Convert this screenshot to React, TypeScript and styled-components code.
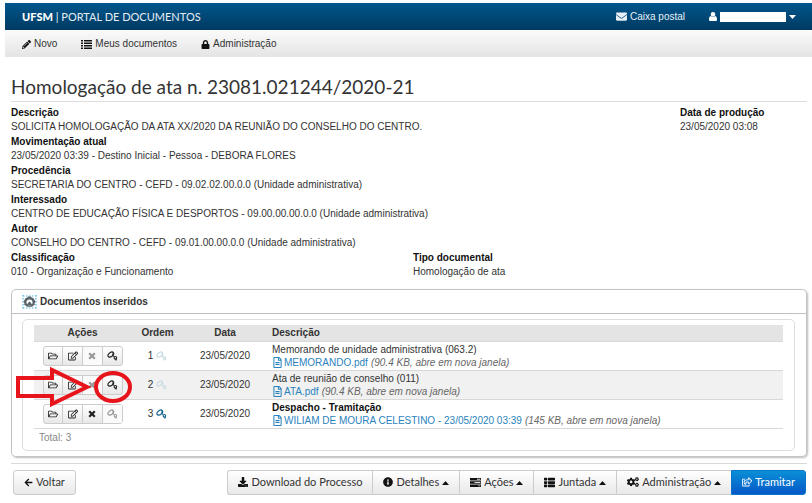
import React from "react";
import styled, { createGlobalStyle, css } from "styled-components";
import {
  FaPencilAlt, FaLock, FaEnvelope, FaRegFolderOpen, FaRegEdit,
  FaRegFileAlt, FaArrowLeft, FaDownload, FaInfoCircle, FaThList, FaCogs,
  FaRegShareSquare,
} from "react-icons/fa";

const GlobalStyle = createGlobalStyle`
  *, *::before, *::after { box-sizing: border-box; }
  body {
    margin: 0;
    background: #fff;
    color: #333;
    font: 10px/14px "Liberation Sans", Arial, sans-serif;
  }
  button { font: inherit; color: inherit; cursor: pointer; }
  a { text-decoration: none; }
  svg { flex: none; }
`;

const Page = styled.div`
  padding: 3px 0 8px 5px;
`;

const TopBar = styled.header`
  display: flex;
  align-items: center;
  height: 27px;
  padding: 0 16px 0 17px;
  background: linear-gradient(#00568c, #003a62);
  color: #fff;
`;

const Brand = styled.a`
  margin-right: auto;
  color: #e4edf4;
  font: 11px/16px Lato, sans-serif;
  b { color: #fff; font-weight: 900; }
`;

const TopLink = styled.a`
  display: flex;
  align-items: center;
  gap: 3px;
  color: #e8f0f6;
`;

const UserButton = styled.button`
  display: flex;
  align-items: center;
  gap: 3px;
  margin-left: 24px;
  padding: 0;
  border: 0;
  background: none;
  color: #fff;
`;

const HiddenName = styled.span`
  width: 66px;
  height: 10px;
  background: #fff;
`;

const NavBar = styled.nav`
  display: flex;
  align-items: center;
  gap: 24px;
  height: 27px;
  padding: 0 17px;
  border-top: 1px solid #fff;
  background: linear-gradient(#fafafa, #e4e4e4);
`;

const NavLink = styled.a`
  display: flex;
  align-items: center;
  gap: 3px;
  color: #333;
  svg { color: #111; }
`;

const Main = styled.main`
  padding: 17px 5px 0 6px;
`;

const Title = styled.h1`
  margin: 0;
  padding-bottom: 1px;
  border-bottom: 1px solid #ddd;
  color: #333;
  font: 400 19px/26px Lato, sans-serif;
`;

const Details = styled.dl`
  display: grid;
  grid-template-columns: 402fr 267fr 127fr;
  row-gap: 1px;
  margin: 0;
  padding: 4px 0 10px;
`;

const Field = styled.div<{ $span?: number }>`
  grid-column: span ${(p) => p.$span ?? 1};
  dt { color: #111; font-weight: 700; }
  dd { margin: 0; }
`;

const Panel = styled.section`
  border: 1px solid #c4c4c4;
  border-radius: 5px;
  box-shadow: 1px 1px 2px #bbb;
`;

const PanelHeader = styled.h2`
  display: flex;
  align-items: center;
  gap: 3px;
  height: 24px;
  margin: 0;
  padding: 0 10px;
  border-bottom: 1px solid #c0c0c0;
  font-size: 10px;
`;

const PanelBody = styled.div`
  margin: 5px 11px 5px 10px;
  padding: 5px 11px;
  border: 1px solid #ddd;
  border-radius: 5px;
`;

const DocTable = styled.table`
  width: 100%;
  border-collapse: collapse;
  table-layout: fixed;
`;

const Column = styled.col<{ $width?: number }>`
  ${(p) => p.$width && css`width: ${p.$width}px;`}
`;

const HeadCell = styled.th<{ $left?: boolean }>`
  height: 16px;
  padding: 0 ${(p) => (p.$left ? 6 : 0)}px;
  background: #e4e4e4;
  text-align: ${(p) => (p.$left ? "left" : "center")};
`;

const Row = styled.tr<{ $shaded?: boolean }>`
  border-top: 1px solid #d8d8d8;
  border-bottom: 1px solid #d8d8d8;
  background: ${(p) => (p.$shaded ? "#f1f1f1" : "#fff")};
`;

const Cell = styled.td<{ $left?: boolean }>`
  position: relative;
  height: 29px;
  padding: 0 ${(p) => (p.$left ? 6 : 0)}px;
  text-align: ${(p) => (p.$left ? "left" : "center")};
  line-height: 13px;
`;

const Actions = styled.div`
  display: inline-flex;
  width: 80px;
  height: 20px;
  border: 1px solid #ccc;
  border-radius: 3px;
  background: linear-gradient(#fff, #e8e8e8);
  vertical-align: middle;
`;

const ActionButton = styled.button`
  display: flex;
  flex: 1;
  align-items: center;
  justify-content: center;
  padding: 0;
  border: 0;
  background: none;
  color: #222;
  & + & { border-left: 1px solid #ccc; }
  &:disabled { background: #fafafa; color: #999; cursor: default; }
`;

const Order = styled.span<{ $signed?: boolean }>`
  display: inline-flex;
  align-items: center;
  gap: 3px;
  svg { color: ${(p) => (p.$signed ? "#14628f" : "#c9dce2")}; }
`;

const DocTitle = styled.div<{ $strong?: boolean }>`
  ${(p) => p.$strong && css`color: #111; font-weight: 700;`}
`;

const FileLine = styled.div`
  display: flex;
  align-items: center;
  gap: 3px;
  color: #666;
  white-space: nowrap;
`;

const FileLink = styled.a`
  display: flex;
  align-items: center;
  gap: 1px;
  color: #2a83bd;
`;

const Total = styled.p`
  margin: 2px 0 0;
  padding-left: 5px;
  color: #888;
  line-height: 14px;
`;

const Annotation = styled.svg`
  position: absolute;
  z-index: 1;
  top: -6px;
  left: -19px;
  pointer-events: none;
`;

const Footer = styled.footer`
  display: flex;
  justify-content: space-between;
  margin-top: 6px;
  padding: 6px 1px 0 2px;
  border-top: 1px solid #d8d8d8;
`;

const ButtonGroup = styled.div`
  display: flex;
`;

const Button = styled.button<{ $primary?: boolean }>`
  display: flex;
  align-items: center;
  gap: 3px;
  height: 25px;
  padding: 0 10px;
  border: 1px solid #ccc;
  border-right-width: 0;
  background: linear-gradient(#fff, #e8e8e8);
  color: #333;
  font: 11px/16px Lato, sans-serif;
  white-space: nowrap;
  svg { color: #111; }
  &:first-child { border-radius: 3px 0 0 3px; }
  &:last-child { border-right-width: 1px; border-radius: 0 3px 3px 0; }
  &:only-child { border-radius: 3px; }
  ${(p) => p.$primary && css`
    border-color: #0874c8;
    background: linear-gradient(#0a8fd6, #0558c8);
    color: #fff;
    svg { color: #fff; }
  `}
`;

const KeyIcon = () => (
  <svg width="11" height="10" viewBox="0 0 11 10" fill="none" stroke="currentColor" aria-hidden="true">
    <ellipse cx="3.8" cy="3.6" rx="3.2" ry="2" transform="rotate(-35 3.8 3.6)" strokeWidth="1.2" />
    <path d="M6.2 1.6 5.800 4.400 7.200 5.600" strokeWidth="1.1" />
    <circle cx="8.400" cy="6.800" r="1.300" strokeWidth="1.1" />
    <path d="M8 8.800h2" strokeWidth="1" />
  </svg>
);

const ListIcon = () => (
  <svg width="11" height="9" viewBox="0 0 11 9" fill="currentColor" aria-hidden="true">
    <path d="M0 0h2v1.5H0zM3 0h8v1.5H3zM0 2.5h2V4H0zM3 2.5h8V4H3zM0 5h2v1.5H0zM3 5h8v1.5H3zM0 7.5h2V9H0zM3 7.5h8V9H3z" />
  </svg>
);

const TasksIcon = () => (
  <svg width="11" height="9" viewBox="0 0 11 9" fill="currentColor" aria-hidden="true">
    <path d="M0 0h11v2.4H0zM0 3.3h11v2.4H0zM0 6.6h11V9H0z" />
    <path d="M7 .8h3.3v.9H7zM4.5 4.1h5.8V5H4.5zM8.2 7.4h2.1v.9H8.2z" fill="#ddd" />
  </svg>
);

const UserIcon = () => (
  <svg width="8" height="9" viewBox="0 0 8 9" fill="currentColor" aria-hidden="true">
    <circle cx="4" cy="2.4" r="2.3" />
    <path d="M1.7 4.1C.4 4.5 0 6 0 7.4 0 8.4.6 9 1.5 9h5C7.4 9 8 8.4 8 7.4 8 6 7.6 4.5 6.3 4.1 5 5.4 3 5.4 1.7 4.1z" />
  </svg>
);

const CrossIcon = () => (
  <svg width="8" height="8" viewBox="0 0 8 8" fill="none" stroke="currentColor" strokeWidth="2.2" aria-hidden="true">
    <path d="M1.2 1.2 6.8 6.8M6.8 1.2 1.2 6.8" />
  </svg>
);

const CaretUp = () => (
  <svg width="7" height="8" viewBox="0 0 7 8" fill="currentColor" aria-hidden="true">
    <path d="M0 7 3.5 3 7 7z" />
  </svg>
);

const CaretDown = () => (
  <svg width="7" height="4" viewBox="0 0 7 4" fill="currentColor" aria-hidden="true">
    <path d="M0 0h7L3.5 4z" />
  </svg>
);

const PanelIcon = () => (
  <svg width="15" height="14" viewBox="0 0 15 14" aria-hidden="true">
    <path d="M1 0v14M14 0v14M1 1h13M1 13h13" fill="none" stroke="#4fb3dc" strokeWidth="1.2" strokeDasharray="1.5 1.5" />
    <path d="M6 1.6h3l.8 1.2 1.6.2.8 1.600 1.300 1.900-.900 1.700.100 1.800-1.700.700-.900 1H4.900l-.900-1-1.700-.700.100-1.800-.900-1.700 1.300-1.900.800-1.600 1.600-.200z" fill="#59636a" />
    <circle cx="7.5" cy="7.4" r="3" fill="#fff" />
    <path d="M4.300 10.200 7.500 6.200l3.200 4z" fill="#59636a" />
  </svg>
);

const Highlight = () => (
  <Annotation width="118" height="42" viewBox="0 0 118 42" fill="none" stroke="#e8141c" strokeWidth="4" aria-hidden="true">
    <path d="M3 13H37V5L72 22 37 39V31H3Z" />
    <ellipse cx="98" cy="22" rx="17" ry="14" />
  </Annotation>
);

type Doc = {
  order: number;
  title: string;
  file: string;
  size: string;
  removable?: boolean;
  signed?: boolean;
  strong?: boolean;
  shaded?: boolean;
  highlighted?: boolean;
};

const docs: Doc[] = [
  { order: 1, title: "Memorando de unidade administrativa (063.2)", file: "MEMORANDO.pdf", size: "90.4 KB" },
  { order: 2, title: "Ata de reunião de conselho (011)", file: "ATA.pdf", size: "90.4 KB", shaded: true, highlighted: true },
  { order: 3, title: "Despacho - Tramitação", file: "WILIAM DE MOURA CELESTINO - 23/05/2020 03:39", size: "145 KB", removable: true, signed: true, strong: true },
];

const fields = [
  ["Movimentação atual", "23/05/2020 03:39 - Destino Inicial - Pessoa - DEBORA FLORES"],
  ["Procedência", "SECRETARIA DO CENTRO - CEFD - 09.02.02.00.0.0 (Unidade administrativa)"],
  ["Interessado", "CENTRO DE EDUCAÇÃO FÍSICA E DESPORTOS - 09.00.00.00.0.0 (Unidade administrativa)"],
  ["Autor", "CONSELHO DO CENTRO - CEFD - 09.01.00.00.0.0 (Unidade administrativa)"],
];

export default function App() {
  return (
    <>
      <GlobalStyle />
      <Page>
        <TopBar>
          <Brand href="#"><b>UFSM</b> | PORTAL DE DOCUMENTOS</Brand>
          <TopLink href="#"><FaEnvelope size={11} /> Caixa postal</TopLink>
          <UserButton aria-label="Usuário">
            <UserIcon /><HiddenName /><CaretDown />
          </UserButton>
        </TopBar>
        <NavBar>
          <NavLink href="#"><FaPencilAlt size={9} /> Novo</NavLink>
          <NavLink href="#"><ListIcon /> Meus documentos</NavLink>
          <NavLink href="#"><FaLock size={9} /> Administração</NavLink>
        </NavBar>
        <Main>
          <Title>Homologação de ata n. 23081.021244/2020-21</Title>
          <Details>
            <Field $span={2}>
              <dt>Descrição</dt>
              <dd>SOLICITA HOMOLOGAÇÃO DA ATA XX/2020 DA REUNIÃO DO CONSELHO DO CENTRO.</dd>
            </Field>
            <Field>
              <dt>Data de produção</dt>
              <dd>23/05/2020 03:08</dd>
            </Field>
            {fields.map(([label, value]) => (
              <Field key={label} $span={3}>
                <dt>{label}</dt>
                <dd>{value}</dd>
              </Field>
            ))}
            <Field>
              <dt>Classificação</dt>
              <dd>010 - Organização e Funcionamento</dd>
            </Field>
            <Field $span={2}>
              <dt>Tipo documental</dt>
              <dd>Homologação de ata</dd>
            </Field>
          </Details>
          <Panel>
            <PanelHeader><PanelIcon /> Documentos inseridos</PanelHeader>
            <PanelBody>
              <DocTable>
                <colgroup>
                  <Column $width={97} />
                  <Column $width={53} />
                  <Column $width={82} />
                  <Column />
                </colgroup>
                <thead>
                  <tr>
                    <HeadCell>Ações</HeadCell>
                    <HeadCell>Ordem</HeadCell>
                    <HeadCell>Data</HeadCell>
                    <HeadCell $left>Descrição</HeadCell>
                  </tr>
                </thead>
                <tbody>
                  {docs.map((doc) => (
                    <Row key={doc.order} $shaded={doc.shaded}>
                      <Cell>
                        <Actions>
                          <ActionButton aria-label="Abrir"><FaRegFolderOpen size={10} /></ActionButton>
                          <ActionButton aria-label="Editar"><FaRegEdit size={10} /></ActionButton>
                          <ActionButton aria-label="Remover" disabled={!doc.removable}><CrossIcon /></ActionButton>
                          <ActionButton aria-label="Assinar" disabled={doc.signed}><KeyIcon /></ActionButton>
                        </Actions>
                        {doc.highlighted && <Highlight />}
                      </Cell>
                      <Cell><Order $signed={doc.signed}>{doc.order} <KeyIcon /></Order></Cell>
                      <Cell>23/05/2020</Cell>
                      <Cell $left>
                        <DocTitle $strong={doc.strong}>{doc.title}</DocTitle>
                        <FileLine>
                          <FileLink href="#"><FaRegFileAlt size={11} />{doc.file}</FileLink>
                          <em>({doc.size}, abre em nova janela)</em>
                        </FileLine>
                      </Cell>
                    </Row>
                  ))}
                </tbody>
              </DocTable>
              <Total>Total: 3</Total>
            </PanelBody>
          </Panel>
          <Footer>
            <ButtonGroup>
              <Button><FaArrowLeft size={9} /> Voltar</Button>
            </ButtonGroup>
            <ButtonGroup>
              <Button><FaDownload size={10} /> Download do Processo</Button>
              <Button><FaInfoCircle size={10} /> Detalhes <CaretUp /></Button>
              <Button><TasksIcon /> Ações <CaretUp /></Button>
              <Button><FaThList size={11} /> Juntada <CaretUp /></Button>
              <Button><FaCogs size={12} /> Administração <CaretUp /></Button>
              <Button $primary><FaRegShareSquare size={10} /> Tramitar</Button>
            </ButtonGroup>
          </Footer>
        </Main>
      </Page>
    </>
  );
}
